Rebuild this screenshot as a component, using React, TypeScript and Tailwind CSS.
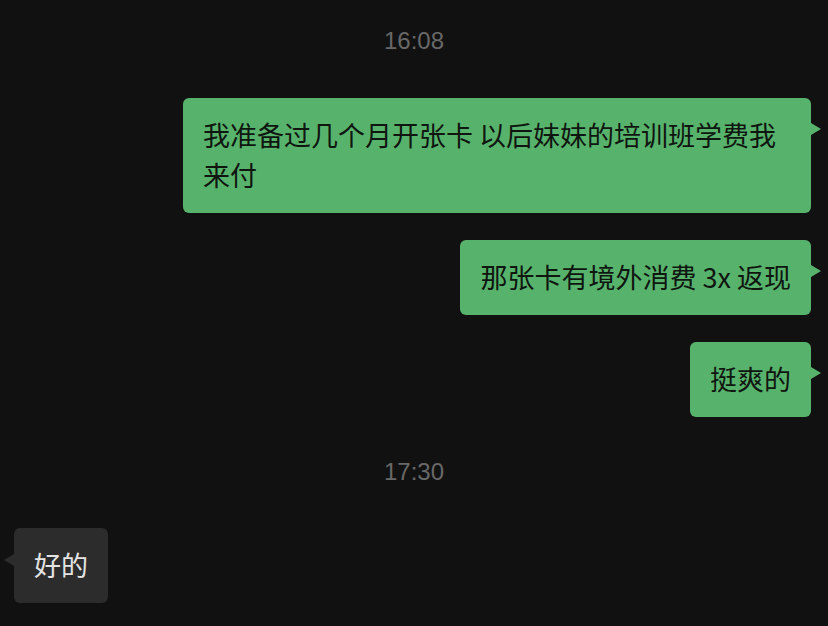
const font = { fontFamily: '"Noto Sans CJK SC", "Liberation Sans", sans-serif' };

const TimeStamp = ({ time }: { time: string }) => (
  <div className="flex justify-center text-[24px] leading-[28px] text-[#686868] font-['Liberation_Sans',sans-serif]">
    {time}
  </div>
);

const Sent = ({ text, className = "" }: { text: string; className?: string }) => (
  <div className={`flex justify-end pr-[17px] ${className}`}>
    <div className="relative max-w-[628px] rounded-[6px] bg-[#57b36c] px-5 pt-[17px] pb-[18px] text-[27px] leading-[40px] text-[#0f150f]">
      {text}
      <div className="absolute left-full top-[25px] h-0 w-0 border-y-[6px] border-l-[10px] border-y-transparent border-l-[#57b36c]" />
    </div>
  </div>
);

const Received = ({ text, className = "" }: { text: string; className?: string }) => (
  <div className={`flex justify-start pl-[14px] ${className}`}>
    <div className="relative rounded-[6px] bg-[#2c2c2c] px-5 pt-[17px] pb-[18px] text-[27px] leading-[40px] text-[#e4e4e4]">
      {text}
      <div className="absolute right-full top-[26px] h-0 w-0 border-y-[6px] border-r-[10px] border-y-transparent border-r-[#2c2c2c]" />
    </div>
  </div>
);

export default function App() {
  return (
    <div className="h-[626px] w-[828px] overflow-hidden bg-[#111111] pt-[27px]" style={font}>
      <TimeStamp time="16:08" />
      <Sent className="mt-[43px]" text="我准备过几个月开张卡 以后妹妹的培训班学费我来付" />
      <Sent className="mt-[27px]" text="那张卡有境外消费 3x 返现" />
      <Sent className="mt-[27px]" text="挺爽的" />
      <div className="mt-[41px]">
        <TimeStamp time="17:30" />
      </div>
      <Received className="mt-[42px]" text="好的" />
    </div>
  );
}
